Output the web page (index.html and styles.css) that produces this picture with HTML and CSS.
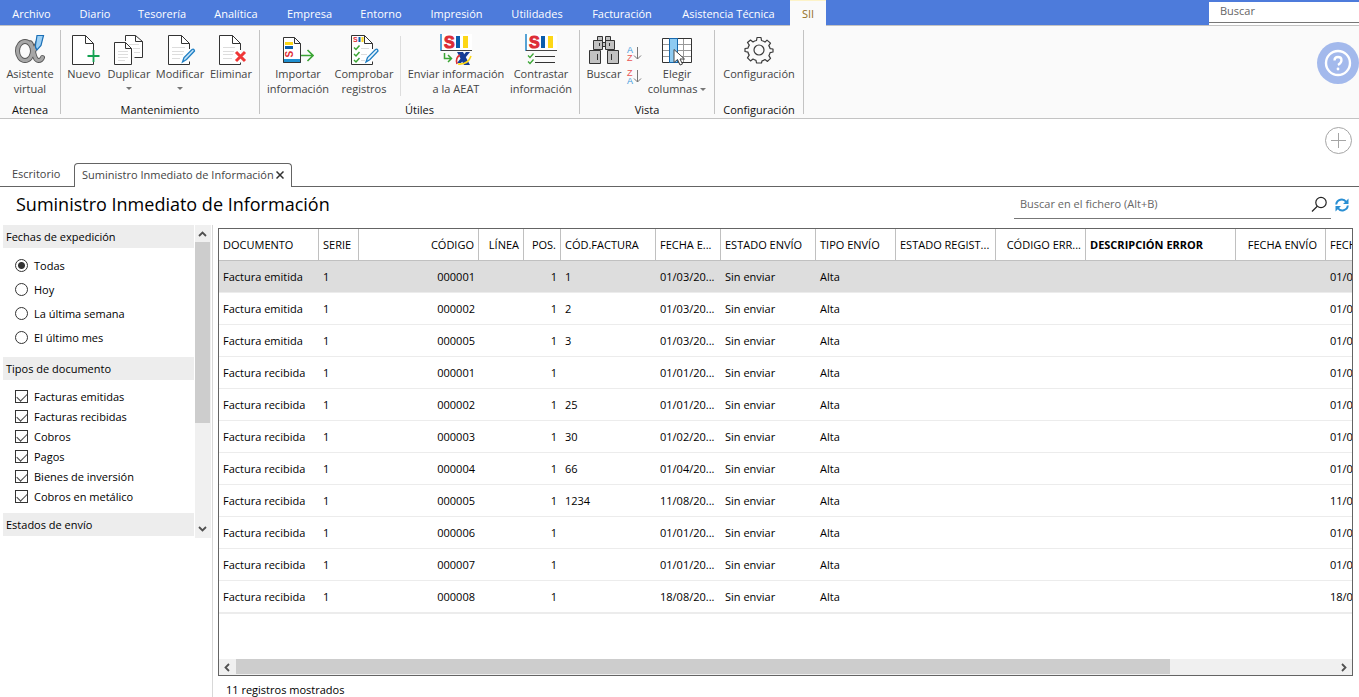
FILE: index.html
```html
<!DOCTYPE html>
<html lang="es">
<head>
<meta charset="utf-8">
<title>Suministro Inmediato de Información</title>
<link rel="stylesheet" href="styles.css">
</head>
<body>
<header class="menubar">
  <nav class="menu">
    <a href="#">Archivo</a><a href="#">Diario</a><a href="#">Tesorería</a><a href="#">Analítica</a><a href="#">Empresa</a><a href="#">Entorno</a><a href="#">Impresión</a><a href="#">Utilidades</a><a href="#">Facturación</a><a href="#">Asistencia Técnica</a><a href="#" class="active">SII</a>
  </nav>
  <div class="menu-search"><input type="search" placeholder="Buscar" aria-label="Buscar"></div>
</header>

<section class="ribbon">
  <div class="group">
    <div class="tools tools-atenea">
      <button class="tool">
        <svg width="32" height="32" viewBox="0 0 32 32"><g fill="none" stroke-linecap="round"><g stroke="#555" stroke-width="5"><ellipse cx="11" cy="17" rx="7.500" ry="9.500"/><path d="M24 8C22 13 19.500 17 18 21M16.500 9C20 13 19 26 24.500 26.500Q27.500 26.500 28.500 23.500"/></g><g stroke="#a6a6a6" stroke-width="3.200"><ellipse cx="11" cy="17" rx="7.500" ry="9.500"/><path d="M24 8C22 13 19.500 17 18 21M16.500 9C20 13 19 26 24.500 26.500Q27.500 26.500 28.500 23.500"/></g></g><path d="M23 1.500h6.500l-2.500 10-4 4.500q-2-2-1.500-5z" fill="#9dd0f5" stroke="#1b6fb5" stroke-width="1.200"/></svg>
        <span>Asistente<br>virtual</span>
      </button>
    </div>
    <h2>Atenea</h2>
  </div>

  <div class="group">
    <div class="tools tools-edit">
      <button class="tool">
        <svg width="32" height="32" viewBox="0 0 32 32"><path d="M25.500 17V9.500L17.500 1.500H4.500v29h21v-3M17.500 1.500v8h8" fill="#fff" stroke="#333"/><path d="M20 22h12" stroke="#fafafa" stroke-width="5"/><path d="M25.500 16v12M19.500 22h12" stroke="#12a150" stroke-width="1.800"/></svg>
        <span>Nuevo</span>
      </button>
      <button class="tool">
        <svg width="32" height="32" viewBox="0 0 32 32"><path d="M12.500 7V1.500h10l7 6v16h-8M22.500 1.500v6h7" fill="#fff" stroke="#333"/><path d="M16 10.500h10M20 14.500h7M21 18.500h6" stroke="#ddd"/><path d="M1.500 8.500h11l6 6v16h-17zM12.500 8.500v6h6" fill="#fff" stroke="#333"/><path d="M5 17.500h10M5 20.500h10M5 23.500h10M5 26.500h7" stroke="#ddd"/></svg>
        <span>Duplicar</span><i class="caret"></i>
      </button>
      <button class="tool">
        <svg width="32" height="32" viewBox="0 0 32 32"><path d="M25.500 15V9.500L17.500 1.500H4.500v29h21v-3M17.500 1.500v8h8" fill="#fff" stroke="#333"/><path d="M8 13.500h13M8 17.500h12M8 20.500h11M8 24.500h8" stroke="#ddd"/><path d="M18.500 28l1.500-4.500 8-8q2-1 2.500 1.500l-8 8.500z" fill="#bfe0f7" stroke="#1f7fc4" stroke-width="1.300"/></svg>
        <span>Modificar</span><i class="caret"></i>
      </button>
      <button class="tool">
        <svg width="32" height="32" viewBox="0 0 32 32"><path d="M25.500 16V9.500L17.500 1.500H4.500v29h21v-2M17.500 1.500v8h8" fill="#fff" stroke="#333"/><path d="M8 13.500h12M8 17.500h11M8 20.500h10M8 24.500h9" stroke="#ddd"/><path d="M21 18l9 9M30 18l-9 9" stroke="#ef3636" stroke-width="3"/></svg>
        <span>Eliminar</span>
      </button>
    </div>
    <h2>Mantenimiento</h2>
  </div>

  <div class="group">
    <div class="tools tools-utils">
      <button class="tool">
        <svg width="32" height="32" viewBox="0 0 32 32"><path d="M1.500 3.500h11l6 6v18.500h-17zM12.500 3.500v6h6" fill="#fff" stroke="#333"/><rect x="1" y="25" width="18" height="4" fill="#1f8fd0"/><path d="M1.500 9v19.500h17V14" fill="none" stroke="#333"/><rect x="3" y="8" width="8" height="3" fill="#fdd716"/><rect x="3" y="12" width="8" height="3" fill="#0a5cab"/><text class="sii sii-small" transform="translate(11 23.500) rotate(-90)">S</text><path d="M19 21.500h11.500M25.500 16l5.500 5.500-5.500 5.500" fill="none" stroke="#3ba535" stroke-width="1.600"/></svg>
        <span>Importar<br>información</span>
      </button>
      <button class="tool">
        <svg width="32" height="32" viewBox="0 0 32 32"><path d="M24.500 15V9.500L16.500 1.500H3.500v29h21v-3M16.500 1.500v8h8" fill="#fff" stroke="#333"/><text class="sii sii-tiny" x="5" y="8">S</text><path d="M10.500 3h2v5h-2z" fill="#0a5cab"/><path d="M13.500 3h2v5h-2z" fill="#fdd716"/><path d="M6 13.500l2 2 3.500-4M6 20l2 2 3.500-4M6 26l2 2 3.500-4" fill="none" stroke="#3ba535" stroke-width="1.500"/><path d="M13 14.500h8M13 20.500h6M13 26.500h4" stroke="#ddd"/><path d="M18 28l1.500-4.500 8-8q2-1 2.500 1.500l-8 8.500z" fill="#e9f5fd" stroke="#1f7fc4" stroke-width="1.300"/></svg>
        <span>Comprobar<br>registros</span>
      </button>
      <div class="divider"></div>
      <button class="tool">
        <svg width="32" height="32" viewBox="0 0 32 32"><path fill="#fff" d="M0 0h32v17H0z"/><path d="M1 0v17" stroke="#2b8ccb" stroke-width="1.600"/><path d="M1 16.500h31" stroke="#444"/><text class="sii" x="4" y="14">S</text><path d="M16 2h4v12h-4z" fill="#0a5cab"/><path d="M23 2h5v12h-5z" fill="#fdd716"/><path d="M4.500 19v5.500H11M8 21l3.500 3.500L8 28" fill="none" stroke="#3ba535" stroke-width="1.500"/><path d="M17 18h6l7 13h-6z" fill="#143c96"/><path d="M30 18h-4l-9 11h4z" fill="#143c96"/><path d="M20 21q-5 3-3 9" fill="none" stroke="#e22f32" stroke-width="1.600"/><path d="M18 30q10 1 13-8" fill="none" stroke="#fdd716" stroke-width="1.600"/></svg>
        <span>Enviar información<br>a la AEAT</span>
      </button>
      <button class="tool">
        <svg width="32" height="32" viewBox="0 0 32 32"><path fill="#fff" d="M0 0h32v17H0z"/><path d="M1 0v17" stroke="#2b8ccb" stroke-width="1.600"/><path d="M1 16.500h31" stroke="#444"/><text class="sii" x="4" y="14">S</text><path d="M16 2h4v12h-4z" fill="#0a5cab"/><path d="M23 2h5v12h-5z" fill="#fdd716"/><path d="M3 21.500l2 2 3.500-4M3 27.500l2 2 3.500-4" fill="none" stroke="#3ba535" stroke-width="1.300"/><path d="M10 22.500h20M10 28.500h20" stroke="#333"/></svg>
        <span>Contrastar<br>información</span>
      </button>
    </div>
    <h2>Útiles</h2>
  </div>

  <div class="group">
    <div class="tools tools-view">
      <button class="tool">
        <svg width="32" height="32" viewBox="0 0 32 32"><g fill="#c2c2c2" stroke="#333"><path d="M9.500 2.500h5v4h-5zM17.500 2.500h5v4h-5zM5.500 6.500h9v9h-9zM17.500 6.500h9v9h-9zM14.500 8.500h3v4h-3zM1.500 16.500h11v13h-11zM19.500 16.500h11v13h-11z"/><path d="M11.500 9v3M21.500 9v3M9.500 20v6M23.500 20v6" /></g></svg>
        <span>Buscar</span>
      </button>
      <div class="sorts">
        <button class="sort" aria-label="Orden ascendente"><svg width="16" height="18" viewBox="0 0 16 18"><text class="sort-a" x="1" y="8">A</text><text class="sort-z" x="1" y="16">Z</text><path d="M11.500 2v12M8 10.500l3.500 3.500 3.500-3.500" fill="none" stroke="#777"/></svg></button>
        <button class="sort" aria-label="Orden descendente"><svg width="16" height="18" viewBox="0 0 16 18"><text class="sort-z" x="1" y="8">Z</text><text class="sort-a" x="1" y="16">A</text><path d="M11.500 2v12M8 10.500l3.500 3.500 3.500-3.500" fill="none" stroke="#777"/></svg></button>
      </div>
      <button class="tool">
        <svg width="32" height="32" viewBox="0 0 32 32"><path d="M1.500 4.500h29v24h-29z" fill="#fff" stroke="#333"/><path d="M2 10.500h28M2 16.500h28M2 22.500h28M22.500 5v23" stroke="#999"/><path d="M8.500 4.500h8v24h-8z" fill="#8ecbf2" stroke="#1668ad"/><path d="M13 15.500v13l3.500-3 2.500 5.500 2.500-1-2.500-5h4.500z" fill="#fff" stroke="#444"/></svg>
        <span>Elegir<br>columnas <i class="caret caret-inline"></i></span>
      </button>
    </div>
    <h2>Vista</h2>
  </div>

  <div class="group">
    <div class="tools tools-config">
      <button class="tool">
        <svg width="32" height="32" viewBox="0 0 32 32"><g fill="none" stroke="#3a3a3a" stroke-width="1.200" stroke-linejoin="round"><path d="M13.500 6.500L14 3.500h4l.500 3q2 .500 3.500 1.600l2-2 3.500 3-1.700 2.600q1 1.500 1.300 3l2.900.300v3l-2.900.600q-.300 1.500-1.200 3l1.600 2.800-3 3-2.500-1.800q-1.500 1-3 1.300L18.500 29h-5l-.500-2.600q-1.700-.400-3-1.300l-2.500 1.800-3-3 1.700-2.800q-1-1.500-1.200-3L2 17.500v-3l3-.400q.300-1.500 1.300-3L4.500 8.500l3-2.500 2.500 2q1.500-1.100 3.500-1.500z"/><circle cx="16" cy="16" r="5"/></g></svg>
        <span>Configuración</span>
      </button>
    </div>
    <h2>Configuración</h2>
  </div>

  <button class="help" aria-label="Ayuda">
    <svg width="42" height="42" viewBox="0 0 42 42"><circle cx="21" cy="21" r="21" fill="#a3b9ec"/><circle cx="21" cy="21" r="12" fill="none" stroke="#fff" stroke-width="2.400"/><path d="M17.500 18.500q0-3.500 3.500-3.500t3.500 3-3.500 5" fill="none" stroke="#fff" stroke-width="2.300"/><circle cx="21" cy="27" r="1.400" fill="#fff"/></svg>
  </button>
</section>

<section class="tabstrip">
  <div class="tabstrip-actions">
    <button class="add" aria-label="Añadir"><svg width="27" height="27" viewBox="0 0 27 27"><g fill="none" stroke="#a5a5a5"><circle cx="13.500" cy="13.500" r="13"/><path d="M13.500 6v15M6 13.500h15"/></g></svg></button>
  </div>
  <div class="tabs">
    <a href="#" class="tab">Escritorio</a>
    <div class="tab tab-active">
      <a href="#">Suministro Inmediato de Información</a>
      <button aria-label="Cerrar"><svg width="8" height="8" viewBox="0 0 8 8"><path d="M.500.500l7 7M7.500.500l-7 7" stroke="#333" stroke-width="1.500"/></svg></button>
    </div>
    <div class="tab-fill"></div>
  </div>
</section>

<section class="titlebar">
  <h1>Suministro Inmediato de Información</h1>
  <div class="file-search">
    <input type="search" placeholder="Buscar en el fichero (Alt+B)" aria-label="Buscar en el fichero">
    <svg width="18" height="18" viewBox="0 0 18 18"><g fill="none" stroke="#222" stroke-width="1.200"><circle cx="10" cy="7.500" r="5.200"/><path d="M6.300 11.300L1 16.500"/></g></svg>
  </div>
  <button class="refresh" aria-label="Actualizar"><svg width="14" height="14" viewBox="0 0 14 14"><path d="M1.200 6.500a5.500 5.500 0 0 1 10-2.500M12.800 7.500a5.500 5.500 0 0 1-10 2.500" fill="none" stroke="#2a8fd3" stroke-width="2"/><path d="M13.500.500v5.500H8zM.500 13.500V8H6z" fill="#2a8fd3"/></svg></button>
</section>

<main class="workspace">
  <aside class="sidebar">
    <form class="filters">
      <h3>Fechas de expedición</h3>
      <div class="options options-radio">
        <label><input type="radio" name="fecha" checked>Todas</label>
        <label><input type="radio" name="fecha">Hoy</label>
        <label><input type="radio" name="fecha">La última semana</label>
        <label><input type="radio" name="fecha">El último mes</label>
      </div>
      <h3>Tipos de documento</h3>
      <div class="options options-check">
        <label><input type="checkbox" checked>Facturas emitidas</label>
        <label><input type="checkbox" checked>Facturas recibidas</label>
        <label><input type="checkbox" checked>Cobros</label>
        <label><input type="checkbox" checked>Pagos</label>
        <label><input type="checkbox" checked>Bienes de inversión</label>
        <label><input type="checkbox" checked>Cobros en metálico</label>
      </div>
      <h3>Estados de envío</h3>
    </form>
    <div class="vscroll">
      <svg width="9" height="6" viewBox="0 0 9 6"><path d="M1 5l3.500-3.500L8 5" fill="none" stroke="#505050" stroke-width="1.800"/></svg>
      <div class="vtrack"><div class="vthumb"></div></div>
      <svg width="9" height="6" viewBox="0 0 9 6"><path d="M1 1l3.500 3.500L8 1" fill="none" stroke="#505050" stroke-width="1.800"/></svg>
    </div>
  </aside>

  <section class="content">
    <div class="grid">
      <div class="grid-body">
        <table>
          <colgroup><col class="w100"><col class="w40"><col class="w120"><col class="w45"><col class="w37"><col class="w95"><col class="w65"><col class="w95"><col class="w80"><col class="w100"><col class="w90"><col class="w150"><col class="w90"><col></colgroup>
          <thead>
            <tr><th>DOCUMENTO</th><th>SERIE</th><th class="num">CÓDIGO</th><th class="num">LÍNEA</th><th class="num">POS.</th><th>CÓD.FACTURA</th><th>FECHA E...</th><th>ESTADO ENVÍO</th><th>TIPO ENVÍO</th><th>ESTADO REGIST...</th><th class="num">CÓDIGO ERR...</th><th class="strong">DESCRIPCIÓN ERROR</th><th class="num sent">FECHA ENVÍO</th><th>FECHA</th></tr>
          </thead>
          <tbody>
            <tr class="selected"><td>Factura emitida</td><td>1</td><td class="num">000001</td><td></td><td class="num">1</td><td>1</td><td>01/03/20...</td><td>Sin enviar</td><td>Alta</td><td></td><td></td><td></td><td></td><td>01/03/20...</td></tr>
            <tr><td>Factura emitida</td><td>1</td><td class="num">000002</td><td></td><td class="num">1</td><td>2</td><td>01/03/20...</td><td>Sin enviar</td><td>Alta</td><td></td><td></td><td></td><td></td><td>01/03/20...</td></tr>
            <tr><td>Factura emitida</td><td>1</td><td class="num">000005</td><td></td><td class="num">1</td><td>3</td><td>01/03/20...</td><td>Sin enviar</td><td>Alta</td><td></td><td></td><td></td><td></td><td>01/03/20...</td></tr>
            <tr><td>Factura recibida</td><td>1</td><td class="num">000001</td><td></td><td class="num">1</td><td></td><td>01/01/20...</td><td>Sin enviar</td><td>Alta</td><td></td><td></td><td></td><td></td><td>01/01/20...</td></tr>
            <tr><td>Factura recibida</td><td>1</td><td class="num">000002</td><td></td><td class="num">1</td><td>25</td><td>01/01/20...</td><td>Sin enviar</td><td>Alta</td><td></td><td></td><td></td><td></td><td>01/01/20...</td></tr>
            <tr><td>Factura recibida</td><td>1</td><td class="num">000003</td><td></td><td class="num">1</td><td>30</td><td>01/02/20...</td><td>Sin enviar</td><td>Alta</td><td></td><td></td><td></td><td></td><td>01/02/20...</td></tr>
            <tr><td>Factura recibida</td><td>1</td><td class="num">000004</td><td></td><td class="num">1</td><td>66</td><td>01/04/20...</td><td>Sin enviar</td><td>Alta</td><td></td><td></td><td></td><td></td><td>01/04/20...</td></tr>
            <tr><td>Factura recibida</td><td>1</td><td class="num">000005</td><td></td><td class="num">1</td><td>1234</td><td>11/08/20...</td><td>Sin enviar</td><td>Alta</td><td></td><td></td><td></td><td></td><td>11/08/20...</td></tr>
            <tr><td>Factura recibida</td><td>1</td><td class="num">000006</td><td></td><td class="num">1</td><td></td><td>01/01/20...</td><td>Sin enviar</td><td>Alta</td><td></td><td></td><td></td><td></td><td>01/01/20...</td></tr>
            <tr><td>Factura recibida</td><td>1</td><td class="num">000007</td><td></td><td class="num">1</td><td></td><td>01/01/20...</td><td>Sin enviar</td><td>Alta</td><td></td><td></td><td></td><td></td><td>01/01/20...</td></tr>
            <tr><td>Factura recibida</td><td>1</td><td class="num">000008</td><td></td><td class="num">1</td><td></td><td>18/08/20...</td><td>Sin enviar</td><td>Alta</td><td></td><td></td><td></td><td></td><td>18/08/20...</td></tr>
          </tbody>
        </table>
      </div>
      <div class="hscroll">
        <svg width="6" height="9" viewBox="0 0 6 9"><path d="M5 1L1.500 4.500 5 8" fill="none" stroke="#505050" stroke-width="1.800"/></svg>
        <div class="htrack"><div class="hthumb"></div></div>
        <svg width="6" height="9" viewBox="0 0 6 9"><path d="M1 1l3.500 3.500L1 8" fill="none" stroke="#505050" stroke-width="1.800"/></svg>
      </div>
    </div>
    <p class="status">11 registros mostrados</p>
  </section>
</main>
</body>
</html>
```

FILE: styles.css
```css
* { box-sizing: border-box; }

body {
  margin: 0;
  height: 100vh;
  display: flex;
  flex-direction: column;
  overflow: hidden;
  background: #fff;
  color: #111;
  font: 11px/15px "Open Sans", "Noto Sans", sans-serif;
}

button {
  margin: 0;
  padding: 0;
  border: 0;
  background: none;
  color: inherit;
  font: inherit;
  cursor: pointer;
}

a { color: inherit; text-decoration: none; }
svg { display: block; flex: none; }
h1, h2, h3, p { margin: 0; font-weight: 400; }

input[type="search"] {
  min-width: 0;
  flex: 1;
  padding: 0;
  border: 0;
  outline: 0;
  background: transparent;
  color: #333;
  font: inherit;
  appearance: none;
}
input::placeholder { color: #666; opacity: 1; }

/* Menu bar */
.menubar {
  flex: none;
  display: flex;
  justify-content: space-between;
  height: 26px;
  background: #4d7bdb;
  border-bottom: 1px solid #c3c3c3;
}
.menu {
  display: grid;
  grid-template-columns: 65px 60px 74px 74px 73px 70px 81px 80px 90px 123px 36px;
  color: #fff;
}
.menu a {
  display: flex;
  align-items: center;
  justify-content: center;
  white-space: nowrap;
}
.menu a:first-child { padding-right: 2px; }
.menu .active {
  height: 26px;
  background: #fafafa;
  border-top: 1px solid #fdf3c8;
  color: #94701c;
}
.menu-search {
  display: flex;
  width: 150px;
  border-top: 2px solid #4d7bdb;
  background: #fff;
}
.menu-search input {
  height: 21px;
  padding: 0 11px 4px;
  border-bottom: 1px solid #777;
}

/* Ribbon */
.ribbon {
  flex: none;
  display: flex;
  height: 93px;
  background: #fafafa;
  border-bottom: 1px solid #c3c3c3;
}
.group {
  display: flex;
  flex-direction: column;
  justify-content: space-between;
  margin: 4px 0;
  padding-top: 4px;
  border-right: 1px solid #c3c3c3;
}
.group h2 {
  margin-bottom: -3px;
  font-size: 11px;
  line-height: 15px;
  text-align: center;
}
.tools { display: grid; color: #444; }
.tools-atenea { grid-template-columns: 60px; }
.tools-edit { grid-template-columns: 46px 44px 58px 44px; padding-right: 6px; }
.tools-utils { grid-template-columns: 76px 56px 17px 94px 76px; }
.tools-view { grid-template-columns: 48px 12px 74px; }
.tools-config { grid-template-columns: 88px; }
.tool {
  display: flex;
  flex-direction: column;
  align-items: center;
  justify-content: flex-start;
  min-width: 0;
  white-space: nowrap;
}
.tool span { text-align: center; }
.sii { fill: #dd2c35; stroke: #dd2c35; font: 700 16px "Liberation Sans", sans-serif; }
.sii-small { font-size: 10px; stroke-width: 0; }
.sii-tiny { font-size: 7px; stroke-width: 0; }
.sort-a, .sort-z { font: 9px "Liberation Sans", sans-serif; }
.sort-a { fill: #3b98dc; }
.sort-z { fill: #e95555; }
.divider {
  justify-self: center;
  width: 1px;
  margin-top: 2px;
  background: #ddd;
}
.caret {
  margin-top: 6px;
  border: 3px solid transparent;
  border-top-color: #777;
  border-bottom: 0;
}
.caret-inline { display: inline-block; margin: 0 0 2px; }
.sorts {
  display: flex;
  flex-direction: column;
  align-items: center;
  gap: 5px;
  padding-top: 11px;
}
.help { align-self: flex-start; margin: 16px 0 0 auto; }

/* Document tabs */
.tabstrip { flex: none; }
.tabstrip-actions {
  display: flex;
  align-items: flex-start;
  justify-content: flex-end;
  height: 44px;
  padding: 8px 7px 0;
}
.tabs { display: flex; height: 24px; color: #444; }
.tab {
  display: flex;
  align-items: center;
  gap: 2px;
  width: 74px;
  padding: 0 0 2px 12px;
  border-bottom: 1px solid #646464;
  white-space: nowrap;
}
.tab-active {
  width: 218px;
  padding-left: 7px;
  border: 1px solid #646464;
  border-bottom: 0;
  border-radius: 4px 4px 0 0;
}
.tab-fill { flex: 1; border-bottom: 1px solid #646464; }

/* Title row */
.titlebar {
  flex: none;
  display: flex;
  align-items: flex-start;
  height: 38px;
  padding: 0 10px 0 16px;
}
.titlebar h1 {
  flex: 1;
  color: #000;
  font-size: 18px;
  line-height: 35px;
  white-space: nowrap;
}
.file-search {
  display: flex;
  align-items: center;
  width: 317px;
  height: 32px;
  padding: 2px 2px 0 6px;
  border-bottom: 1px solid #777;
}
.refresh { margin: 11px 0 0 4px; }

/* Workspace */
.workspace { flex: 1; display: flex; min-height: 0; }
.sidebar {
  flex: none;
  display: flex;
  align-items: flex-start;
  width: 213px;
  padding-left: 3px;
  border-right: 1px solid #d8d8d8;
}
.filters { flex: 1; color: #000; }
.filters h3 {
  padding-left: 3px;
  background: #ededed;
  font-size: 11px;
  line-height: 23px;
}
.options { display: flex; flex-direction: column; padding: 5px 12px 8px; }
.options-check { padding: 6px 12px 7px; }
.options label {
  display: flex;
  align-items: center;
  gap: 6px;
  height: 24px;
  white-space: nowrap;
}
.options-check label { height: 20px; }
.options input {
  width: 13px;
  height: 13px;
  margin: 0;
  appearance: none;
  border: 1px solid #333;
  background: #fff;
}
.options input[type="radio"] { border-radius: 50%; }
.options input[type="radio"]:checked {
  border-color: #333;
  background: radial-gradient(circle, #333 3px, #fff 4px);
}
.options input[type="checkbox"]:checked::before {
  content: "";
  display: block;
  width: 9px;
  height: 5px;
  margin: 2px 0 0 1px;
  border: solid #444;
  border-width: 0 0 1px 1px;
  transform: rotate(-45deg);
}
.vscroll {
  display: flex;
  flex-direction: column;
  align-items: center;
  width: 16px;
  height: 313px;
  margin: 0 1px;
  padding: 6px 1px 6px 0;
  background: #f0f0f0;
}
.vtrack { flex: 1; width: 100%; padding: 5px 0; }
.vthumb { height: 65%; background: #cdcdcd; }

.content { flex: 1; display: flex; flex-direction: column; min-width: 0; padding: 3px 6px 0 5px; }
.grid {
  flex: 1;
  display: flex;
  flex-direction: column;
  min-height: 0;
  border: 1px solid #646464;
}
.grid-body { flex: 1; overflow: hidden; }
table {
  width: 1207px;
  min-width: 100%;
  table-layout: fixed;
  border-spacing: 0;
  border-bottom: 1px solid #ececec;
  color: #000;
}
th, td {
  height: 32px;
  padding: 0 4px;
  text-align: left;
  font-weight: 400;
  white-space: nowrap;
  overflow: hidden;
}
th { border-right: 1px solid #c0c0c0; border-bottom: 1px solid #c0c0c0; }
td { border-bottom: 1px solid #ececec; }
.num { text-align: right; }
.sent { padding-right: 8px; }
.strong { font-weight: 700; }
.selected { background: #ddd; }
.w37 { width: 37px; }
.w40 { width: 40px; }
.w45 { width: 45px; }
.w65 { width: 65px; }
.w80 { width: 80px; }
.w90 { width: 90px; }
.w95 { width: 95px; }
.w100 { width: 100px; }
.w120 { width: 120px; }
.w150 { width: 150px; }

.hscroll {
  flex: none;
  display: flex;
  align-items: center;
  height: 16px;
  padding: 0 5px;
  background: #f0f0f0;
}
.htrack { flex: 1; height: 100%; padding: 0 6px 1px; }
.hthumb { width: 85%; height: 100%; background: #cdcdcd; }
.status { flex: none; padding: 6px 8px 0; line-height: 15px; color: #000; }
```
